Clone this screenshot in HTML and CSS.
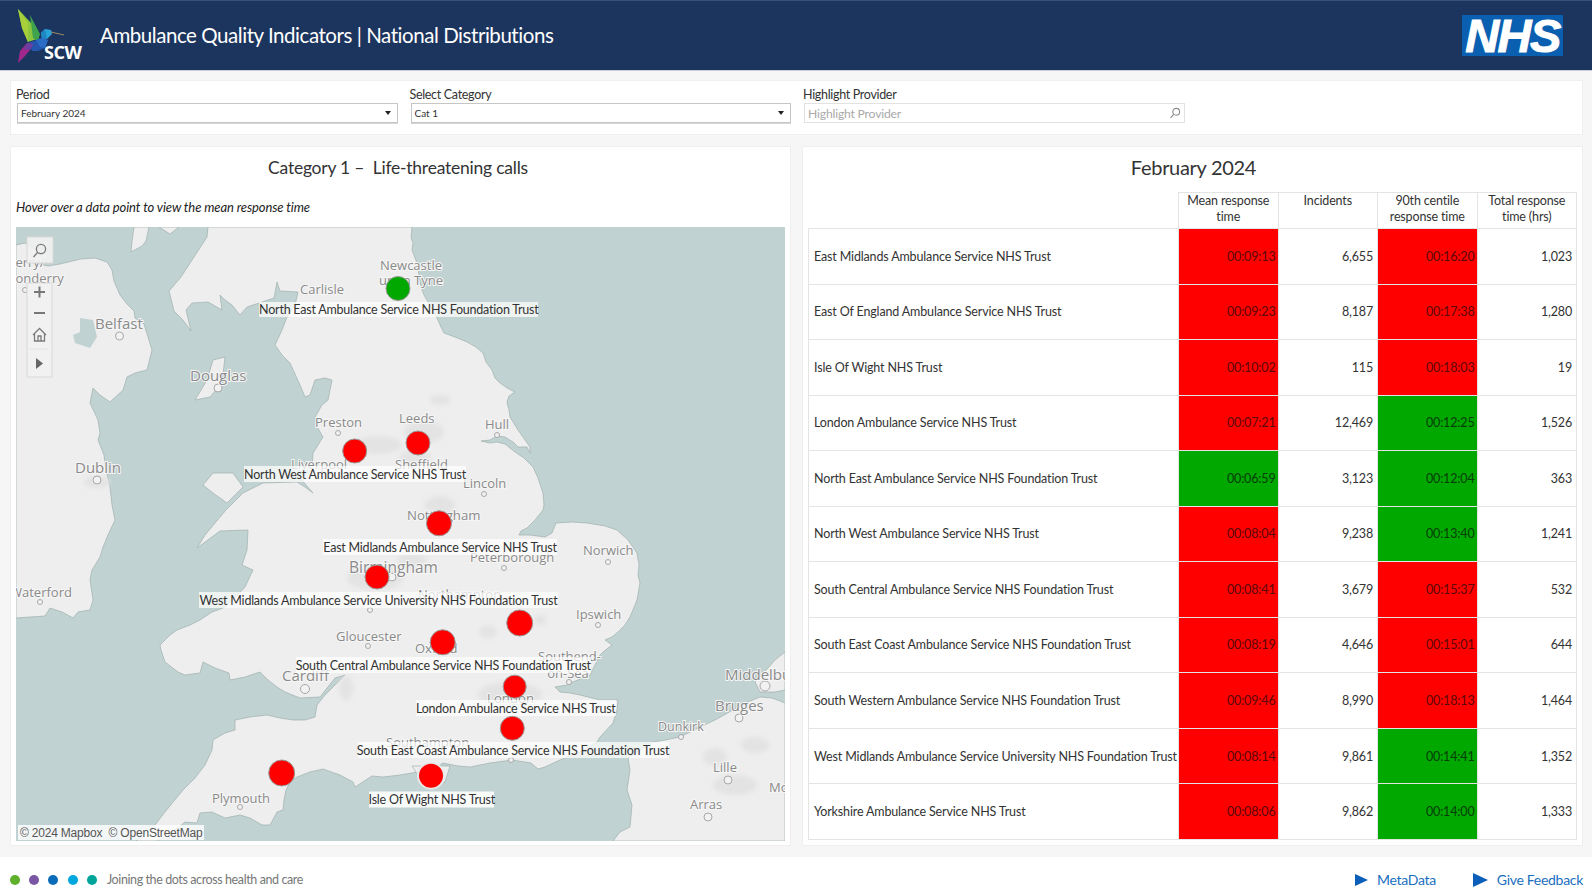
FILE: index.html
```html
<!DOCTYPE html>
<html lang="en">
<head>
<meta charset="utf-8">
<title>Ambulance Quality Indicators | National Distributions</title>
<link rel="stylesheet" href="styles.css">
</head>
<body>
<header class="topbar">
  <div class="brand">
    <svg class="bird" viewBox="0 0 70 70" aria-hidden="true">
      <polygon points="18,8 32,23 37,38 28,41 22,27" fill="#8cc63f"/>
      <polygon points="18,8 28,22 28,41 22,27" fill="#a9cf3a"/>
      <polygon points="30,14 40,33 38,40 33,37" fill="#3fa34d"/>
      <polygon points="41,32 45,28 51,29 52,33 47,38 42,38" fill="#29a3d8"/>
      <polygon points="41,32 45,28 47,38 42,38" fill="#1f86c4"/>
      <line x1="51" y1="31" x2="64" y2="34" stroke="#9a8a60" stroke-width="1"/>
      <polygon points="28,42 42,37 48,39 45,47 38,50 32,50" fill="#2456b0"/>
      <polygon points="36,39 42,37 48,39 45,47 40,46" fill="#2b6cc4"/>
      <polygon points="27,42 33,43 30,49 25,55 18,62 20,50" fill="#a0278c"/>
      <polygon points="27,42 33,43 30,49 24,48" fill="#6b3fa0"/>
    </svg>
    <span class="brand-name">SCW</span>
  </div>
  <h1 class="app-title">Ambulance Quality Indicators | National Distributions</h1>
  <div class="nhs-logo">NHS</div>
</header>

<main class="content">
  <section class="panel filters">
    <div class="filter">
      <label class="filter-label">Period</label>
      <div class="select"><span>February 2024</span><i class="caret"></i></div>
    </div>
    <div class="filter">
      <label class="filter-label">Select Category</label>
      <div class="select"><span>Cat 1</span><i class="caret"></i></div>
    </div>
    <div class="filter filter-search">
      <label class="filter-label">Highlight Provider</label>
      <div class="search">
        <span>Highlight Provider</span>
        <svg class="search-icon" viewBox="0 0 12 12" aria-hidden="true"><circle cx="7.2" cy="4.8" r="3.4"/><line x1="4.8" y1="7.2" x2="1.5" y2="10.8"/></svg>
      </div>
    </div>
  </section>

  <div class="columns">
    <section class="panel map-panel">
      <h2 class="panel-title map-title">Category 1 –&nbsp; Life-threatening calls</h2>
      <p class="hint">Hover over a data point to view the mean response time</p>
      <svg class="map" viewBox="16 227 769 614" width="769" height="614">
        <rect class="sea" x="16" y="227" width="769" height="614"/>
        <g class="land">
          <path d="M208 227 L412 227 L411 238 L413 243 L412 250 L417 263 L419 275 L421 287 L424 295 L428 302 L437 318 L441 327 L444 333 L455 337 L467 342 L476 347 L483 353 L486 362 L492 370 L495 378 L500 383 L507 388 L515 392 L509 396 L507 402 L509 410 L510 417 L518 430 L530 447 L530 453 L527 447 L518 447 L513 442 L505 437 L497 436 L490 440 L481 441 L490 443 L497 442 L505 444 L515 452 L524 458 L533 467 L538 478 L543 493 L544 505 L543 510 L535 520 L527 528 L521 531 L519 535 L530 535 L545 537 L552 533 L556 523 L572 522 L587 523 L605 526 L617 530 L628 540 L637 553 L639 565 L638 575 L640 583 L637 600 L630 617 L625 625 L618 632 L612 637 L605 640 L612 645 L603 652 L600 655 L590 675 L573 682 L567 685 L555 687 L560 692 L570 693 L580 695 L600 700 L618 700 L617 710 L613 723 L600 737 L597 742 L580 752 L560 760 L545 767 L538 769 L531 763 L512 760 L490 763 L470 767 L458 766 L443 763 L435 768 L417 772 L400 775 L383 777 L372 776 L355 787 L353 782 L340 775 L323 769 L310 772 L297 777 L290 782 L286 790 L284 800 L283 810 L277 812 L270 825 L262 825 L250 818 L240 815 L225 818 L212 812 L200 813 L197 823 L185 822 L175 830 L157 841 L136 841 L140 838 L155 825 L165 812 L183 790 L195 778 L205 765 L212 750 L213 740 L225 733 L235 730 L235 720 L250 717 L267 715 L280 718 L293 720 L305 720 L315 717 L317 705 L325 695 L335 685 L345 675 L335 678 L320 697 L300 698 L285 692 L277 687 L268 680 L260 672 L245 677 L230 680 L229 673 L215 668 L203 662 L200 673 L185 675 L178 672 L165 662 L161 650 L160 645 L170 635 L177 630 L190 625 L200 620 L212 612 L223 608 L235 598 L245 587 L253 570 L242 565 L247 550 L248 530 L220 531 L197 548 L205 535 L226 510 L243 493 L263 483 L297 482 L305 487 L313 493 L300 478 L312 470 L313 453 L323 437 L316 425 L315 417 L322 405 L328 400 L332 380 L325 378 L315 380 L310 395 L305 397 L300 385 L290 363 L282 355 L275 345 L282 330 L287 317 L295 305 L298 292 L280 291 L277 282 L274 298 L247 307 L240 315 L232 305 L225 300 L220 295 L222 310 L208 302 L192 303 L186 310 L191 331 L183 320 L174 311 L169 291 L181 277 L194 257 L207 237 Z"/>
          <path d="M16 262 L30 262 L48 266 L60 264 L81 259 L95 258 L107 262 L112 270 L114 281 L120 295 L127 304 L134 311 L135 318 L144 324 L152 350 L147 370 L135 373 L127 377 L123 390 L110 402 L100 395 L93 388 L90 403 L98 420 L100 433 L98 440 L104 455 L106 470 L110 487 L112 505 L115 520 L108 535 L103 547 L100 557 L92 570 L90 580 L93 600 L90 610 L78 612 L73 618 L62 612 L50 608 L45 616 L30 617 L16 618 Z"/>
          <path d="M785 703 L772 698 L760 697 L745 703 L733 710 L715 720 L700 727 L680 737 L665 740 L653 742 L628 758 L630 770 L627 790 L632 805 L630 827 L620 832 L613 841 L785 841 Z"/>
          <path d="M785 652 L775 660 L768 668 L755 682 L760 692 L775 692 L785 690 Z"/>
          <path d="M203 485 L213 473 L233 473 L243 487 L227 503 L213 493 Z"/>
          <path d="M225 357 L213 360 L207 380 L195 400 L210 397 L222 383 Z"/>
          <path d="M134 227 L149 227 L146 241 L142 246 L131 252 L132 241 Z"/>
          <path d="M159 227 L179 227 L170 234 Z"/>
          <path d="M16 245 L25 243 L35 250 L45 262 L16 262 Z"/>
          <path d="M412 766 L450 766 L445 782 L425 786 Z"/>
        </g>
        <path class="sea lough" d="M80 318 L93 320 L97 337 L90 348 L75 343 L73 335 L80 332 Z"/>
        <g class="urban">
          <ellipse cx="378" cy="445" rx="24" ry="9"/>
          <ellipse cx="424" cy="432" rx="20" ry="11"/>
          <ellipse cx="415" cy="458" rx="16" ry="7"/>
          <ellipse cx="325" cy="472" rx="14" ry="6"/>
          <ellipse cx="440" cy="505" rx="15" ry="9"/>
          <ellipse cx="375" cy="578" rx="28" ry="12"/>
          <ellipse cx="412" cy="560" rx="14" ry="8"/>
          <ellipse cx="510" cy="695" rx="32" ry="13"/>
          <ellipse cx="346" cy="688" rx="7" ry="12"/>
          <ellipse cx="97" cy="482" rx="13" ry="6"/>
          <ellipse cx="715" cy="757" rx="12" ry="9"/>
          <ellipse cx="735" cy="785" rx="22" ry="10"/>
          <ellipse cx="755" cy="745" rx="14" ry="8"/>
          <ellipse cx="488" cy="632" rx="9" ry="6"/>
          <ellipse cx="540" cy="620" rx="6" ry="5"/>
          <ellipse cx="440" cy="400" rx="10" ry="5"/>
        </g>
        <g class="city-dots">
          <circle cx="119.5" cy="336" r="4"/><circle cx="218" cy="388" r="4"/><circle cx="338" cy="433" r="2.5"/>
          <circle cx="97" cy="480" r="4"/><circle cx="497" cy="435" r="2.5"/><circle cx="484" cy="494" r="2.5"/>
          <circle cx="608" cy="562" r="2.5"/><circle cx="504" cy="568" r="2.5"/><circle cx="392" cy="577" r="4"/>
          <circle cx="598" cy="625" r="2.5"/><circle cx="368" cy="646" r="2.5"/><circle cx="370" cy="610" r="2.5"/>
          <circle cx="305" cy="689" r="4.5"/><circle cx="569" cy="682" r="2.5"/><circle cx="511" cy="760" r="2.5"/>
          <circle cx="240" cy="807" r="2.5"/><circle cx="40" cy="602" r="2.5"/><circle cx="765" cy="686" r="5"/>
          <circle cx="739" cy="718" r="4"/><circle cx="681" cy="737" r="2.5"/><circle cx="728" cy="780" r="4"/>
          <circle cx="708" cy="817" r="4"/><circle cx="25" cy="290" r="2.5"/>
        </g>
        <g class="cities">
          <text class="c14" x="411" y="270" text-anchor="middle">Newcastle</text>
          <text class="c14" x="411" y="285" text-anchor="middle">upon Tyne</text>
          <text class="c14" x="300" y="294">Carlisle</text>
          <text class="c16" x="95" y="329">Belfast</text>
          <text class="c16" x="190" y="381">Douglas</text>
          <text class="c14" x="315" y="427">Preston</text>
          <text class="c16" x="75" y="473">Dublin</text>
          <text class="c14" x="399" y="423">Leeds</text>
          <text class="c14" x="485" y="429">Hull</text>
          <text class="c14" x="291" y="469">Liverpool</text>
          <text class="c14" x="395" y="469">Sheffield</text>
          <text class="c14" x="463" y="488">Lincoln</text>
          <text class="c15" x="407" y="520">Nottingham</text>
          <text class="c14" x="583" y="555">Norwich</text>
          <text class="c14" x="470" y="562">Peterborough</text>
          <text class="c18" x="349" y="573">Birmingham</text>
          <text class="c14" x="418" y="599">Northampton</text>
          <text class="c14" x="576" y="619">Ipswich</text>
          <text class="c14" x="336" y="641">Gloucester</text>
          <text class="c14" x="415" y="653">Oxford</text>
          <text class="c16" x="282" y="681">Cardiff</text>
          <text class="c14" x="538" y="661">Southend-</text>
          <text class="c14" x="568" y="678" text-anchor="middle">on-Sea</text>
          <text class="c15" x="487" y="703">London</text>
          <text class="c14" x="386" y="747">Southampton</text>
          <text class="c14" x="212" y="803">Plymouth</text>
          <text class="c14" x="10" y="597">Waterford</text>
          <text class="c16" x="725" y="680">Middelburg</text>
          <text class="c16" x="715" y="711">Bruges</text>
          <text class="c13" x="658" y="731">Dunkirk</text>
          <text class="c14" x="713" y="772">Lille</text>
          <text class="c14" x="690" y="809">Arras</text>
          <text class="c14" x="769" y="792">Mons</text>
          <text class="c14" x="6" y="267">Derry/</text>
          <text class="c14" x="-15" y="283">Londonderry</text>
        </g>
        <g class="tags">
          <rect x="259" y="302" width="279" height="15"/>
          <rect x="244" y="466" width="222" height="16"/>
          <rect x="323" y="539" width="234" height="16"/>
          <rect x="199" y="592" width="359" height="16"/>
          <rect x="296" y="657" width="295" height="16"/>
          <rect x="416" y="700" width="200" height="16"/>
          <rect x="358" y="742" width="311" height="16"/>
          <rect class="tag-solid" x="369" y="791.5" width="125" height="16"/>
        </g>
        <g class="markers">
          <circle class="green" cx="398" cy="288.5" r="12"/>
          <circle cx="354.7" cy="451" r="12"/>
          <circle cx="418" cy="443" r="12"/>
          <circle cx="439" cy="523.3" r="12.5"/>
          <circle cx="377" cy="577" r="12"/>
          <circle cx="519.7" cy="623" r="13"/>
          <circle cx="442.7" cy="642.3" r="12.5"/>
          <circle cx="514.7" cy="686.7" r="11.5"/>
          <circle cx="512.3" cy="728.3" r="12"/>
          <circle cx="281.7" cy="773" r="13"/>
          <circle class="halo" cx="431" cy="775.7" r="13"/>
        </g>
        <g class="tag-text">
          <text x="398.8" y="314" text-anchor="middle">North East Ambulance Service NHS Foundation Trust</text>
          <text x="355" y="478.5" text-anchor="middle">North West Ambulance Service NHS Trust</text>
          <text x="440" y="551.5" text-anchor="middle">East Midlands Ambulance Service NHS Trust</text>
          <text x="378.5" y="604.5" text-anchor="middle">West Midlands Ambulance Service University NHS Foundation Trust</text>
          <text x="443.3" y="670" text-anchor="middle">South Central Ambulance Service NHS Foundation Trust</text>
          <text x="515.8" y="712.5" text-anchor="middle">London Ambulance Service NHS Trust</text>
          <text x="513" y="754.5" text-anchor="middle">South East Coast Ambulance Service NHS Foundation Trust</text>
          <text x="431.8" y="804" text-anchor="middle">Isle Of Wight NHS Trust</text>
        </g>
        <g class="map-tools">
          <rect class="tool-box" x="27" y="237" width="26" height="26"/>
          <circle class="tool-line" cx="41" cy="249" r="4.6"/>
          <line class="tool-line" x1="37.5" y1="252.5" x2="33.5" y2="257"/>
          <rect class="tool-box" x="27" y="283" width="25" height="94"/>
          <line class="tool-bold" x1="34" y1="292" x2="45" y2="292"/>
          <line class="tool-bold" x1="39.5" y1="286.5" x2="39.5" y2="297.5"/>
          <line class="tool-bold" x1="34" y1="313" x2="45" y2="313"/>
          <path class="tool-line" d="M33 335 L39.5 328.5 L46 335 M34.5 334 V341 H44.5 V334 M38 341 V336 H41 V341"/>
          <line class="tool-sep" x1="30" y1="349" x2="49" y2="349"/>
          <polygon class="tool-fill" points="36,358 43,363.5 36,369"/>
        </g>
        <rect class="credit-bg" x="18" y="825" width="186" height="15"/>
        <text class="credit" x="20" y="837">© 2024 Mapbox&#160; © OpenStreetMap</text>
      </svg>
    </section>

    <section class="panel table-panel">
      <h2 class="panel-title table-title">February 2024</h2>
      <table class="data">
        <colgroup><col class="c-name"><col class="c-num"><col class="c-num"><col class="c-num"><col class="c-num"></colgroup>
        <thead>
          <tr>
            <th class="blank"></th>
            <th>Mean response time</th>
            <th>Incidents</th>
            <th>90th centile response time</th>
            <th>Total response time (hrs)</th>
          </tr>
        </thead>
        <tbody>
          <tr><td class="name">East Midlands Ambulance Service NHS Trust</td><td class="bad">00:09:13</td><td>6,655</td><td class="bad">00:16:20</td><td>1,023</td></tr>
          <tr><td class="name">East Of England Ambulance Service NHS Trust</td><td class="bad">00:09:23</td><td>8,187</td><td class="bad">00:17:38</td><td>1,280</td></tr>
          <tr><td class="name">Isle Of Wight NHS Trust</td><td class="bad">00:10:02</td><td>115</td><td class="bad">00:18:03</td><td>19</td></tr>
          <tr><td class="name">London Ambulance Service NHS Trust</td><td class="bad">00:07:21</td><td>12,469</td><td class="good">00:12:25</td><td>1,526</td></tr>
          <tr><td class="name">North East Ambulance Service NHS Foundation Trust</td><td class="good">00:06:59</td><td>3,123</td><td class="good">00:12:04</td><td>363</td></tr>
          <tr><td class="name">North West Ambulance Service NHS Trust</td><td class="bad">00:08:04</td><td>9,238</td><td class="good">00:13:40</td><td>1,241</td></tr>
          <tr><td class="name">South Central Ambulance Service NHS Foundation Trust</td><td class="bad">00:08:41</td><td>3,679</td><td class="bad">00:15:37</td><td>532</td></tr>
          <tr><td class="name">South East Coast Ambulance Service NHS Foundation Trust</td><td class="bad">00:08:19</td><td>4,646</td><td class="bad">00:15:01</td><td>644</td></tr>
          <tr><td class="name">South Western Ambulance Service NHS Foundation Trust</td><td class="bad">00:09:46</td><td>8,990</td><td class="bad">00:18:13</td><td>1,464</td></tr>
          <tr><td class="name">West Midlands Ambulance Service University NHS Foundation Trust</td><td class="bad">00:08:14</td><td>9,861</td><td class="good">00:14:41</td><td>1,352</td></tr>
          <tr><td class="name">Yorkshire Ambulance Service NHS Trust</td><td class="bad">00:08:06</td><td>9,862</td><td class="good">00:14:00</td><td>1,333</td></tr>
        </tbody>
      </table>
    </section>
  </div>
</main>

<footer class="footer">
  <div class="dots">
    <i class="dot d1"></i><i class="dot d2"></i><i class="dot d3"></i><i class="dot d4"></i><i class="dot d5"></i>
    <span class="strap">Joining the dots across health and care</span>
  </div>
  <nav class="links">
    <a class="link"><i class="tri"></i>MetaData</a>
    <a class="link"><i class="tri tri-large"></i>Give Feedback</a>
  </nav>
</footer>
</body>
</html>
```
FILE: styles.css
```css
* { box-sizing: border-box; }
html, body { margin: 0; padding: 0; }
body {
  width: 1592px;
  height: 893px;
  overflow: hidden;
  background: #fff;
  color: #333;
  font-family: Lato, "Liberation Sans", sans-serif;
  display: flex;
  flex-direction: column;
}

/* Header */
.topbar {
  height: 71px;
  flex: none;
  display: flex;
  align-items: center;
  background: #1c355e;
  border-top: 1px solid #3a5076;
  border-bottom: 1px solid #c9d0da;
}
.brand { position: relative; width: 100px; height: 70px; flex: none; }
.bird { position: absolute; left: 0; top: 0; width: 70px; height: 70px; }
.brand-name {
  position: absolute;
  left: 44px;
  top: 39px;
  font-family: "Open Sans", sans-serif;
  font-weight: 700;
  font-size: 18px;
  line-height: 24px;
  letter-spacing: -0.4px;
  color: #fff;
}
.app-title {
  margin: 0 0 2px;
  flex: 1;
  font-size: 20.5px;
  line-height: 26px;
  font-weight: 400;
  letter-spacing: -0.45px;
  color: #fff;
}
.nhs-logo {
  flex: none;
  width: 101px;
  height: 41px;
  margin-right: 29px;
  background: #0b5fb0;
  color: #fff;
  font-family: "Liberation Sans", sans-serif;
  font-weight: 700;
  font-style: italic;
  font-size: 47px;
  line-height: 41px;
  letter-spacing: -1.5px;
  text-align: center;
  -webkit-text-stroke: 1px #fff;
}

/* Layout */
.content {
  flex: none;
  height: 786px;
  padding: 9px 9px 11px 10px;
  background: #f6f6f6;
  display: flex;
  flex-direction: column;
  gap: 11px;
}
.panel { background: #fff; border: 1px solid #efefef; }
.columns {
  flex: 1;
  min-height: 0;
  display: grid;
  grid-template-columns: 781px 781px;
  gap: 11px;
}

/* Filters */
.filters {
  height: 55px;
  flex: none;
  padding: 6px 0 0 5px;
  display: flex;
  gap: 12px;
}
.filter { width: 381.5px; flex: none; }
.filter-label {
  display: block;
  font-size: 12.5px;
  line-height: 15px;
  letter-spacing: -0.32px;
  color: #333;
}
.select, .search {
  margin: 1px 0 0 1px;
  height: 20px;
  display: flex;
  align-items: center;
  justify-content: space-between;
  font-size: 10px;
  padding: 0 6px 0 3px;
  background: #fff;
  border: 1px solid #c6c6c6;
  box-shadow: 0 1px 0 #d6d6d6;
}
.search {
  border-color: #e2e2e2;
  box-shadow: none;
  color: #a9a9a9;
  font-size: 12.2px;
  letter-spacing: -0.2px;
  padding-right: 3px;
}
.caret {
  width: 0;
  height: 0;
  border-left: 3.5px solid transparent;
  border-right: 3.5px solid transparent;
  border-top: 4px solid #222;
}
.search-icon { width: 12px; height: 12px; fill: none; stroke: #888; stroke-width: 1.1; }

/* Panel headings */
.panel-title {
  margin: 0;
  height: 41px;
  padding-top: 9px;
  text-align: center;
  font-size: 17.5px;
  line-height: 24px;
  font-weight: 400;
  letter-spacing: -0.2px;
  color: #333;
}
.map-title { padding-right: 5px; letter-spacing: -0.23px; }
.table-title { padding-top: 8px; padding-left: 2px; font-size: 20px; letter-spacing: -0.3px; }

/* Map */
.map-panel { padding: 0 5px; }
.hint {
  margin: 0;
  height: 39px;
  padding-top: 11px;
  font-style: italic;
  font-size: 13px;
  line-height: 16px;
  letter-spacing: -0.1px;
  color: #222;
}
.map { display: block; }
.sea { fill: #c0d2d1; }
.lough { stroke: none; }
.land path { fill: #eeeeee; stroke: #9fb0ae; stroke-width: 0.7; stroke-linejoin: round; }
.urban { filter: blur(2px); }
.urban ellipse { fill: #e3e3e3; }
.city-dots circle { fill: #f2f2f2; stroke: #a8a8a8; stroke-width: 1; }
.cities text {
  font-family: "Open Sans", sans-serif;
  fill: #8a8a8a;
  stroke: #f6f6f6;
  stroke-width: 2px;
  paint-order: stroke;
}
.cities .c13 { font-size: 12.5px; }
.cities .c14 { font-size: 13px; }
.cities .c15 { font-size: 13.2px; }
.cities .c16 { font-size: 15px; }
.cities .c18 { font-size: 15.5px; }
.tags rect { fill: #fff; opacity: 0.72; }
.tags .tag-solid { opacity: 0.9; }
.markers circle { fill: #ff0000; stroke: #9a9a9a; stroke-width: 1; }
.markers .green { fill: #00a800; }
.markers .halo { stroke: #e8e8e8; stroke-width: 2; }
.tag-text text {
  font-family: Lato, sans-serif;
  font-size: 12.5px;
  letter-spacing: -0.23px;
  fill: #333;
}
.tool-box { fill: #f1f1f1; fill-opacity: 0.92; stroke: #d8d8d8; stroke-width: 1; }
.tool-line { fill: none; stroke: #7a7a7a; stroke-width: 1.3; }
.tool-bold { stroke: #777; stroke-width: 2; }
.tool-sep { stroke: #e2e2e2; stroke-width: 1; }
.tool-fill { fill: #666; }
.credit-bg { fill: #fff; opacity: 0.8; }
.credit {
  font-family: "Liberation Sans", sans-serif;
  font-size: 12px;
  letter-spacing: -0.2px;
  fill: #555;
}

/* Table */
.table-panel { padding: 0 5px; }
.data {
  width: 768px;
  height: 648px;
  margin-top: 4px;
  table-layout: fixed;
  border-collapse: collapse;
  font-size: 12.5px;
  letter-spacing: -0.15px;
  color: #333;
}
.c-name { width: 370px; }
.c-num { width: 99.5px; }
.data th, .data td { border: 1.5px solid #e4e4e4; padding: 0 5px; }
.data th {
  height: 36px;
  padding: 0 2px;
  vertical-align: top;
  font-weight: 400;
  line-height: 16px;
}
.data .blank { border: 0; border-bottom: 1.5px solid #e4e4e4; }
.data td { text-align: right; padding-right: 4px; }
.data td.name { text-align: left; color: #333; padding-left: 5px; padding-right: 0; white-space: nowrap; }
.data td.bad { background: #ff0000; color: #5a0808; padding-right: 2px; }
.data td.good { background: #00a800; color: #063d06; padding-right: 2px; }

/* Footer */
.footer {
  flex: 1;
  display: flex;
  align-items: center;
  justify-content: space-between;
  padding: 9px 9px 0 10px;
}
.dots { display: flex; align-items: center; gap: 9.2px; }
.dot { width: 10px; height: 10px; border-radius: 50%; flex: none; }
.d1 { background: #5fb12b; }
.d2 { background: #7a56a3; }
.d3 { background: #0a6cb8; }
.d4 { background: #00a7de; }
.d5 { background: #00a499; }
.strap {
  margin-left: 1px;
  font-size: 12.5px;
  letter-spacing: -0.4px;
  color: #777;
}
.links { display: flex; gap: 37px; }
.link {
  display: flex;
  align-items: center;
  gap: 9px;
  font-size: 14px;
  letter-spacing: -0.3px;
  color: #1a6fc0;
}
.tri {
  width: 0;
  height: 0;
  border-top: 6.5px solid transparent;
  border-bottom: 6.5px solid transparent;
  border-left: 13px solid #0b5fb8;
}
.tri-large {
  border-top-width: 7px;
  border-bottom-width: 7px;
  border-left-width: 15px;
}
```
